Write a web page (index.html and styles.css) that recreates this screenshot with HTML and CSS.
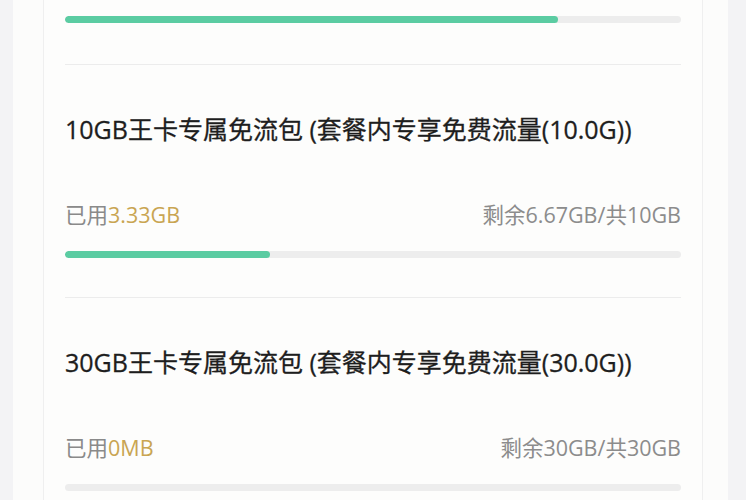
FILE: index.html
```html
<!DOCTYPE html>
<html lang="zh-CN">
<head>
<meta charset="utf-8">
<title>免流包</title>
<link rel="stylesheet" href="styles.css">
</head>
<body>
<div class="panel">
  <div class="card">
    <div class="item item-partial">
      <div class="track"><div class="fill" style="width:80%"></div></div>
    </div>
    <div class="item">
      <div class="title">10GB王卡专属免流包 (套餐内专享免费流量(10.0G))</div>
      <div class="meta">
        <span class="used">已用<span class="amount">3.33GB</span></span>
        <span class="left">剩余6.67GB/共10GB</span>
      </div>
      <div class="track"><div class="fill" style="width:33.3%"></div></div>
    </div>
    <div class="item">
      <div class="title">30GB王卡专属免流包 (套餐内专享免费流量(30.0G))</div>
      <div class="meta">
        <span class="used">已用<span class="amount">0MB</span></span>
        <span class="left">剩余30GB/共30GB</span>
      </div>
      <div class="track"><div class="fill" style="width:0%"></div></div>
    </div>
  </div>
</div>
</body>
</html>
```
FILE: styles.css
```css
html, body {
  margin: 0;
  padding: 0;
  height: 100%;
  overflow: hidden;
}
body {
  background: #f3f3f5;
  font-family: "Open Sans", "Noto Sans CJK SC", sans-serif;
}
.panel {
  margin: 0 18px 0 13px;
  padding: 0 25px 0 30px;
  background: #fcfcfb;
  min-height: 100%;
}
.card {
  border-left: 1px solid #efefef;
  border-right: 1px solid #efefef;
  padding: 0 21px;
  background: #fdfdfc;
  min-height: 500px;
}
.item {
  padding: 47px 0 39px;
  border-top: 1px solid #ececec;
}
.item-partial {
  border-top: none;
  padding-top: 16px;
  padding-bottom: 41px;
}
.title {
  font-size: 25px;
  line-height: 34px;
  font-weight: 400;
  color: #1e1e1e;
  white-space: nowrap;
  -webkit-text-stroke: 0.3px #1e1e1e;
}
.meta {
  display: flex;
  justify-content: space-between;
  align-items: center;
  margin-top: 55px;
  font-size: 21.5px;
  line-height: 28px;
  color: #8a8a8a;
}
.amount {
  color: #c9a552;
  font-weight: 500;
}
.left {
  color: #8c8c8c;
}
.track {
  margin-top: 22px;
  height: 7px;
  border-radius: 4px;
  background: #ededed;
  overflow: hidden;
}
.item-partial .track {
  margin-top: 0;
}
.fill {
  height: 100%;
  border-radius: 4px;
  background: #5bcca2;
}
```
